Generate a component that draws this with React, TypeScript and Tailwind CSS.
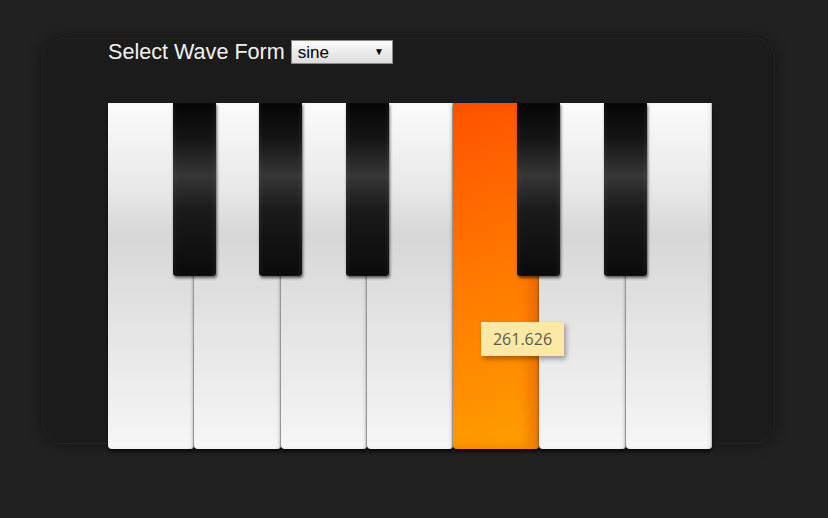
import React from "react";

// one octave, C..B; the G key is the one being played
const WHITE = ["C", "D", "E", "F", "G", "A", "B"];
const ACTIVE = 4;
// black key offsets (px) from the left edge of the keyboard
const BLACK = [65, 151, 238, 409, 496];

export default function App() {
  return (
    <div className="h-[518px] w-full bg-[#212121] pl-[42px] pt-[38px]" style={{ fontFamily: '"Liberation Sans", Arial, sans-serif' }}>
      <div className="h-[406px] w-[733px] rounded-[20px] border border-[#2a221a] bg-[#1b1b1b] pl-[65px] pt-[1px] shadow-[0_0_14px_rgba(0,0,0,0.45)]">
        <div className="flex h-[24px] items-center gap-[6px]">
          <span className="text-[21.6px] leading-none text-[#f2f2f2]">Select Wave Form</span>
          <div className="flex h-[24px] w-[102px] items-center justify-between border border-[#8a8a8a] bg-gradient-to-b from-[#fbfbfb] to-[#dcdcdc] pl-[6px] pr-[8px]">
            <span className="text-[17px] leading-none text-black">sine</span>
            <span className="text-[10px] leading-none text-black">▼</span>
          </div>
        </div>

        <div className="relative mt-[39px] grid h-[346px] w-[604px] grid-cols-7">
          {WHITE.map((n, i) => (
            <div
              key={n}
              className={
                i === ACTIVE
                  ? "rounded-b-[4px] bg-[linear-gradient(160deg,#ff5200_0%,#ff7a00_50%,#ffa000_100%)] shadow-[inset_-10px_0_12px_rgba(200,60,0,0.35),0_3px_3px_rgba(0,0,0,0.6)]"
                  : "rounded-b-[4px] bg-[linear-gradient(to_bottom,#fbfbfb_0%,#e8e8e8_25%,#d7d7d7_38%,#e2e2e2_60%,#f6f6f6_100%)] shadow-[inset_-1px_0_0_#bdbdbd,inset_-3px_0_3px_rgba(0,0,0,0.06),0_3px_3px_rgba(0,0,0,0.6)]"
              }
            />
          ))}

          {BLACK.map((x) => (
            <div
              key={x}
              className="absolute top-0 h-[173px] w-[43px] rounded-b-[3px] bg-[linear-gradient(to_bottom,#050505_0%,#161616_22%,#363636_42%,#1a1a1a_62%,#0b0b0b_100%)] shadow-[inset_3px_0_3px_rgba(255,255,255,0.04),inset_-3px_0_3px_rgba(255,255,255,0.04),1px_2px_3px_rgba(0,0,0,0.6)]"
              style={{ left: x }}
            />
          ))}

          <div
            className="absolute left-[373px] top-[219px] flex h-[34px] w-[83px] items-center justify-center bg-[#fde9a4] text-[16px] text-[#5a5a4e] shadow-[2px_3px_5px_rgba(0,0,0,0.35)]"
            style={{ fontFamily: '"Open Sans", sans-serif' }}
          >
            261.626
          </div>
        </div>
      </div>
    </div>
  );
}
